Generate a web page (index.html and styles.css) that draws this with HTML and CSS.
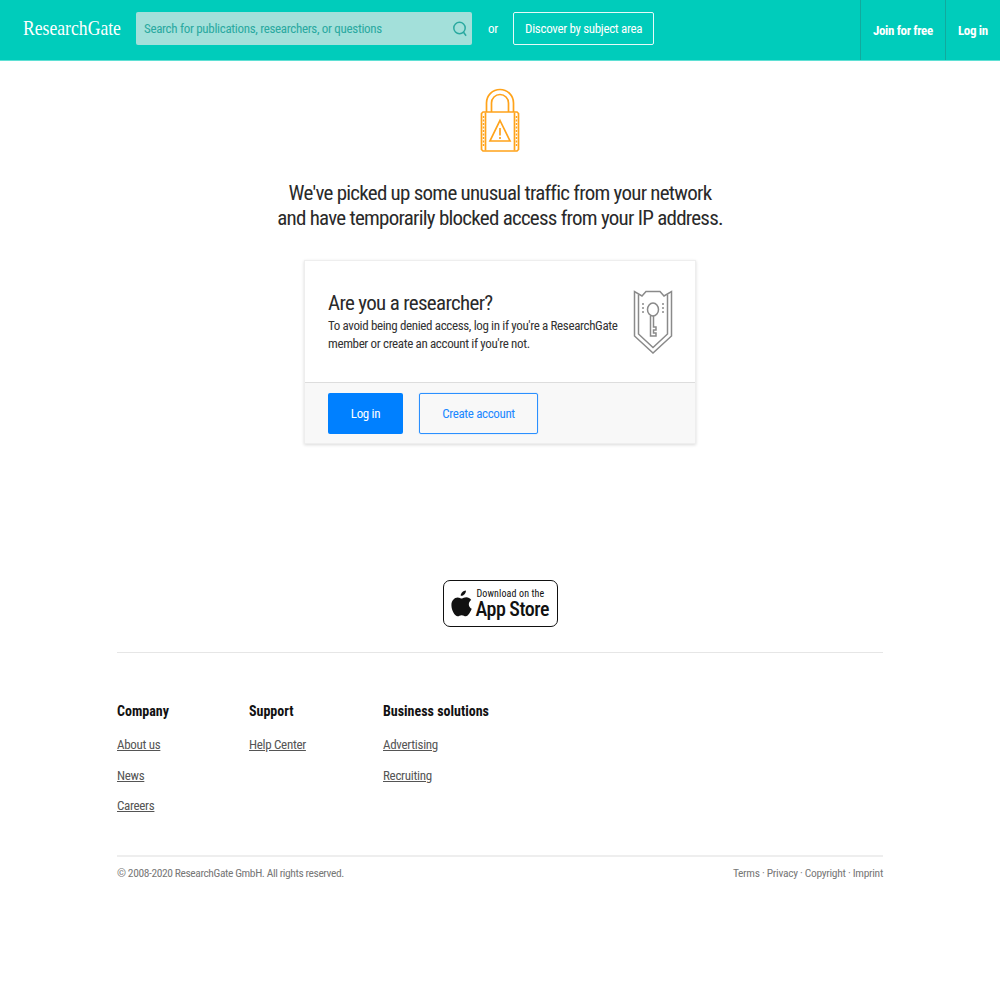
FILE: index.html
```html
<!DOCTYPE html>
<html lang="en">
<head>
    <meta charset="UTF-8">
    <title>ResearchGate</title>
    <link rel="stylesheet" href="styles.css">
</head>
<body>
    <header class="nav">
        <div class="logo-box"><a class="logo">ResearchGate</a></div>
        <div class="search">
            <span class="search-text">Search for publications, researchers, or questions</span>
            <svg class="search-icon" width="16" height="18" viewBox="0 0 16 18" fill="none" stroke="#2aa9a0" stroke-width="1.5">
                <circle cx="7.5" cy="8" r="5.7"/>
                <path d="M11.5 12.2l2.6 3.6"/>
            </svg>
        </div>
        <span class="or">or</span>
        <a class="discover">Discover by subject area</a>
        <div class="nav-right">
            <a class="nav-link join">Join for free</a>
            <a class="nav-link login">Log in</a>
        </div>
    </header>

    <main>
        <svg class="lock" width="40" height="64" viewBox="0 0 40 64" fill="none" stroke="#ffa31a" stroke-width="1.7">
            <path d="M6.500 24V15a13.500 13.500 0 0 1 27 0v9"/>
            <path d="M11.500 24V15a8.500 8.500 0 0 1 17 0v9"/>
            <path d="M3 24h34l1.500 1.500v36L37 63H3l-1.500-1.500v-36z"/>
            <path d="M5.500 24.500v38M34.500 24.500v38"/>
            <path d="M3.500 28v31M36.500 28v31" stroke-dasharray="2 1.500" stroke-width="1.400"/>
            <path d="M20 32.500l10 20.500H10z"/>
            <path d="M20 40v7.500M20 49v2"/>
        </svg>
        <h1 class="notice">We've picked up some unusual traffic from your network<br>and have temporarily blocked access from your IP address.</h1>

        <section class="card">
            <div class="card-top">
                <div class="card-text">
                    <h2>Are you a researcher?</h2>
                    <p>To avoid being denied access, log in if you're a ResearchGate member or create an account if you're not.</p>
                </div>
                <svg class="shield" width="40" height="64" viewBox="0 0 40 64" fill="none" stroke="#8a8a8a" stroke-width="1.500">
                    <path d="M1.500 1.500V46L20 63l18.500-17V1.500L31 6l-4-4.500H13L9 6z"/>
                    <path d="M5.500 4.500V44L20 57.500 34.500 44V4.500"/>
                    <ellipse cx="20" cy="19.500" rx="5.500" ry="6.500"/>
                    <path d="M17.500 26v20H23v-3h-2.500v-3H23v-3h-2.500V26"/>
                    <path d="M10 13v11M30 13v11" stroke-dasharray="2 2"/>
                </svg>
            </div>
            <div class="card-bottom">
                <a class="btn btn-blue">Log in</a>
                <a class="btn btn-outline">Create account</a>
            </div>
        </section>

        <a class="badge">
            <svg width="21" height="29" viewBox="0 0 20 27" fill="#111">
                <path d="M14.200 1c.2 2.600-2.200 5.300-4.900 5.100C9 3.600 11.600 1.100 14.200 1z"/>
                <path d="M19.300 10.200c-3 1.800-3.300 6.500.4 8.300-1 2.700-3.200 7.100-5.600 7.100-1.500 0-2.100-1-3.900-1s-2.500 1-3.900 1C3.800 25.600.4 20 .4 15.100c0-4.400 2.800-7.400 6-7.400 1.600 0 2.900 1 3.900 1s2.400-1.100 4.400-1.100c1.600 0 3.400.8 4.600 2.600z"/>
            </svg>
            <span class="badge-text">
                <small>Download on the</small>
                <strong>App Store</strong>
            </span>
        </a>
    </main>

    <footer class="footer">
        <div class="footer-cols">
            <div class="col col-company">
                <h3>Company</h3>
                <a>About us</a>
                <a>News</a>
                <a>Careers</a>
            </div>
            <div class="col col-support">
                <h3>Support</h3>
                <a>Help Center</a>
            </div>
            <div class="col">
                <h3>Business solutions</h3>
                <a>Advertising</a>
                <a>Recruiting</a>
            </div>
        </div>
        <div class="legal">
            <span class="copyright">© 2008-2020 ResearchGate GmbH. All rights reserved.</span>
            <span>Terms · Privacy · Copyright · Imprint</span>
        </div>
    </footer>
</body>
</html>
```

FILE: styles.css
```css
* {
    padding: 0;
    margin: 0;
    box-sizing: border-box;
}

body {
    font-family: Roboto, sans-serif;
    font-stretch: 75%;
    background: #fff;
    color: #111;
}

.nav {
    display: flex;
    align-items: center;
    height: 61px;
    background: #00ccbb;
    border-bottom: 1px solid #5fe0d4;
    color: #fff;
    padding-left: 23px;
}

.logo-box {
    width: 113px;
    margin-top: -3px;
}

/* the wordmark is narrower than any serif we have */
.logo {
    display: inline-block;
    font-family: "Liberation Serif", serif;
    font-size: 21px;
    white-space: nowrap;
    transform: scaleX(0.84);
    transform-origin: left;
}

.search {
    display: flex;
    align-items: center;
    justify-content: space-between;
    width: 336px;
    height: 33px;
    margin-top: -3px;
    padding: 0 4px 0 8px;
    background: #a3e0da;
    border-radius: 2px;
    color: #2aa9a0;
    font-size: 13px;
    letter-spacing: -0.32px;
}

.or {
    font-size: 13px;
    margin: -3px 15px 0 16px;
    letter-spacing: -0.2px;
}

.discover {
    width: 141px;
    height: 33px;
    margin-top: -3px;
    border: 1px solid #e6faf8;
    border-radius: 2px;
    font-size: 13px;
    line-height: 31px;
    text-align: center;
    letter-spacing: -0.33px;
}

.nav-right {
    display: flex;
    align-self: stretch;
    margin-left: auto;
}

.nav-link {
    display: flex;
    align-items: center;
    padding-top: 1px;
    border-left: 1px solid #12a99d;
    font-size: 13px;
    font-weight: 700;
    letter-spacing: -0.36px;
}

.join {
    width: 85px;
    padding-left: 12px;
}

.login {
    width: 55px;
    padding-left: 12px;
}

main {
    display: flex;
    flex-direction: column;
    align-items: center;
}

.lock {
    margin-top: 27px;
}

.notice {
    margin-top: 29px;
    font-size: 21px;
    font-weight: 400;
    line-height: 25px;
    text-align: center;
    letter-spacing: -0.75px;
    color: #2a2a2a;
}

.card {
    width: 392px;
    margin-top: 29px;
    background: #fff;
    border: 1px solid #eee;
    box-shadow: 0 1px 3px rgba(0, 0, 0, 0.15);
}

.card-top {
    display: flex;
    align-items: center;
    justify-content: space-between;
    height: 121px;
    padding: 0 22px 0 23px;
}

.card-text {
    align-self: flex-start;
    width: 295px;
    margin-top: 29px;
}

.card-text h2 {
    font-size: 21px;
    font-weight: 400;
    line-height: 26px;
    letter-spacing: -0.67px;
    color: #2a2a2a;
}

.card-text p {
    margin-top: 1px;
    font-size: 13px;
    line-height: 18px;
    letter-spacing: -0.36px;
    color: #333;
}

.card-bottom {
    display: flex;
    gap: 16px;
    height: 61px;
    padding: 10px 23px 0;
    background: #f8f8f8;
    border-top: 1px solid #ddd;
}

.btn {
    height: 41px;
    border-radius: 2px;
    font-size: 13px;
    line-height: 41px;
    text-align: center;
    letter-spacing: -0.35px;
}

.btn-blue {
    width: 75px;
    background: #0080ff;
    color: #fff;
}

.btn-outline {
    width: 119px;
    line-height: 39px;
    border: 1px solid #2b90ff;
    box-shadow: 0 0 1px rgba(0, 128, 255, 0.6);
    color: #1c88ff;
}

.badge {
    display: flex;
    align-items: center;
    gap: 4px;
    width: 115px;
    height: 47px;
    margin-top: 136px;
    padding-left: 7px;
    border: 1px solid #111;
    border-radius: 7px;
    color: #111;
}

.badge-text {
    display: flex;
    flex-direction: column;
    white-space: nowrap;
}

.badge-text small {
    padding-left: 1px;
    font-size: 10px;
    line-height: 11px;
    letter-spacing: 0.12px;
}

.badge-text strong {
    font-size: 20px;
    font-weight: 500;
    line-height: 21px;
    letter-spacing: -0.5px;
}

.footer {
    width: 766px;
    margin: 25px auto 0;
    border-top: 1px solid #e6e6e6;
}

.footer-cols {
    display: flex;
    height: 204px;
    padding-top: 48px;
    border-bottom: 2px solid #eee;
}

.col {
    display: flex;
    flex-direction: column;
    align-items: flex-start;
}

.col-company {
    width: 132px;
}

.col-support {
    width: 134px;
}

.col h3 {
    font-size: 14px;
    font-weight: 700;
    line-height: 20px;
    margin-bottom: 9px;
    color: #111;
}

.col a {
    font-size: 13px;
    line-height: 30.600px;
    letter-spacing: -0.3px;
    text-decoration: underline;
    color: #555;
}

.legal {
    display: flex;
    justify-content: space-between;
    padding-top: 8px;
    font-size: 11.500px;
    line-height: 16px;
    letter-spacing: -0.3px;
    color: #777;
}

.copyright {
    letter-spacing: -0.4px;
}
```
